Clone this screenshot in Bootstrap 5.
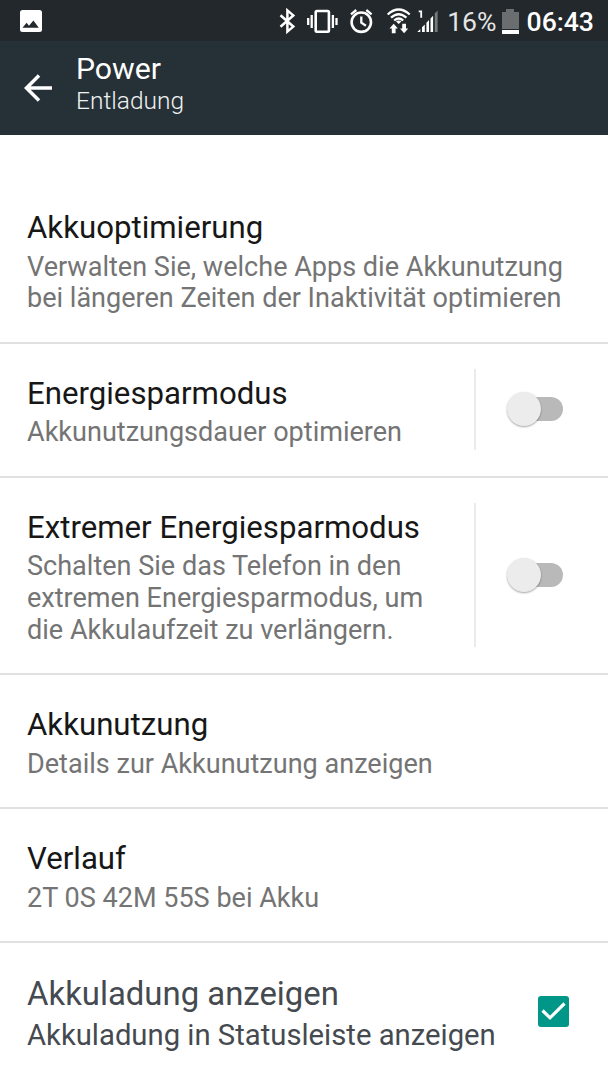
<!DOCTYPE html>
<html lang="de">
<head>
<meta charset="utf-8">
<meta name="viewport" content="width=device-width, initial-scale=1">
<title>Power</title>
<link href="https://cdn.jsdelivr.net/npm/bootstrap@5.3.0/dist/css/bootstrap.min.css" rel="stylesheet">
<style>
body{font-family:Roboto,"Noto Sans",sans-serif;background:#fff;height:1080px;overflow:hidden}
.statusbar{height:41px;background:#22282b;color:#fff;padding:0 14px 0 20px}
.statusbar svg{flex:none;display:block}
.pct{font-size:26.6px;font-weight:400;line-height:41px;padding-top:2px;color:#e4e5e5}
.clock{font-size:26.6px;font-weight:500;line-height:41px;padding-top:2px}
.appbar{height:94px;background:#263137;color:#fff;padding:10px 0 0 24px}
.appbar h1{font-size:30.2px;font-weight:400;line-height:36px;margin:0}
.appbar p{font-size:24.5px;font-weight:300;line-height:28px;margin:0;color:#f0f2f2}
.settings{padding-top:43px}
.settings .setting{padding:31px 27px 26.9px;border:0;border-bottom:2px solid #e0e0e0;background:none}
.setting h2{font-size:31.2px;font-weight:400;line-height:38px;margin:0 0 4.6px;color:#171717;white-space:nowrap}
.setting p{font-size:27.05px;line-height:31.6px;margin:0;color:#747474;white-space:nowrap}
.settings .last{border:0}
.last h2{font-size:32.9px;line-height:40px;margin:0;color:#454a50}
.last p{font-size:29.25px;line-height:42px;color:#454a50}
.toggle-cell{width:134px;margin:-6px -27px -1px 0;border-left:2px solid #ebebeb}
.toggle{width:56px;height:24px;border-radius:12px;background:linear-gradient(90deg,transparent 18px,#b9b9b9 18px);margin-left:31px}
.toggle i{display:block;width:34px;height:34px;border-radius:50%;background:#ececec;box-shadow:0 1px 2px rgba(0,0,0,.35);margin:-5px 0 0 0}
</style>
</head>
<body>
<header>
<div class="statusbar d-flex align-items-center">
<svg width="22" height="22" viewBox="0 0 22 22" class="me-auto"><rect width="22" height="22" rx="2.5" fill="#fff"/><path d="M2.5 17.7 6.6 12.8 9 15.8 13.4 10.5 18.8 17.7z" fill="#22282b"/></svg>
<svg width="160" height="41" viewBox="278 0 160 41" fill="none" stroke="#fff" stroke-width="2">
<path d="M280.5 15.3 293.3 26.6 287.4 31.6V10.4L293.3 15.4 280.5 26.7" stroke-width="2.5"/>
<rect x="315.7" y="11" width="13.2" height="20.8" rx="1.2" stroke-width="2.6"/>
<path d="M311.7 15v13M308.2 18v7M332.9 15v13M336.5 18v7" stroke-width="2.3"/>
<circle cx="361.3" cy="22.2" r="9.7" stroke-width="2.6"/><path d="M361.3 16.5v6.2l4.6 3M351 14.4l5.3-4.4M371.6 14.4 366.3 10" stroke-width="2.3"/>
<path d="M387.7 14.5Q398.7 4.5 409.7 14.5M391 17.7Q398.7 10.8 406.4 17.7M394.2 20.5Q398.7 16.5 403.2 20.5" stroke-width="2.3"/>
<path d="M398.7 24 396 21.6q2.7-2 5.4 0zM389.5 28.5l4.2-4.7 4.2 4.7h-2.3v4.8h-3.8v-4.8zM400 28.5h2.2v-4.8h3.8v4.8h2.2l-4.1 4.7z" fill="#fff" stroke="none"/>
<path d="M418.7 11.3h2.5v6.4" stroke-width="1.8"/>
<path d="M417.3 32l3-3v3zM422 32v-4.7l2.8-2.8V32zM426.4 32v-9.2l2.6-2.8V32zM430.5 32V18.5l2.6-2.8V32z" fill="#fff" stroke="none"/>
<path d="M434.8 32V13.5l2.8-3V32z" fill="#777b7d" stroke="none"/>
</svg>
<span class="pct" style="margin-left:9px">16%</span>
<svg width="17" height="25" viewBox="0 0 17 25" style="margin:2px 0 0 5px"><path d="M0 3h4V0h8v3h5v17H0z" fill="#6b6e70"/><path d="M0 21h17v4H0z" fill="#fff"/></svg>
<span class="clock" style="margin-left:8px">06:43</span>
</div>
<div class="appbar d-flex">
<svg width="28" height="28" viewBox="0 0 28 28" style="margin:23px 24px 0 0" fill="none" stroke="#fff" stroke-width="3.5"><path d="M28 14H3M15 1.5 2.5 14 15 26.5"/></svg>
<div><h1>Power</h1><p>Entladung</p></div>
</div>
</header>
<main class="settings list-group list-group-flush">
<section class="setting list-group-item"><h2>Akkuoptimierung</h2><p>Verwalten Sie, welche Apps die Akkunutzung<br>bei längeren Zeiten der Inaktivität optimieren</p></section>
<section class="setting list-group-item d-flex"><div class="flex-grow-1"><h2>Energiesparmodus</h2><p>Akkunutzungsdauer optimieren</p></div><div class="toggle-cell d-flex align-items-center"><div class="toggle"><i></i></div></div></section>
<section class="setting list-group-item d-flex"><div class="flex-grow-1"><h2>Extremer Energiesparmodus</h2><p>Schalten Sie das Telefon in den<br>extremen Energiesparmodus, um<br>die Akkulaufzeit zu verlängern.</p></div><div class="toggle-cell d-flex align-items-center"><div class="toggle"><i></i></div></div></section>
<section class="setting list-group-item"><h2>Akkunutzung</h2><p>Details zur Akkunutzung anzeigen</p></section>
<section class="setting list-group-item"><h2>Verlauf</h2><p>2T 0S 42M 55S bei Akku</p></section>
<section class="setting last list-group-item d-flex justify-content-between"><div><h2>Akkuladung anzeigen</h2><p>Akkuladung in Statusleiste anzeigen</p></div>
<svg width="31" height="31" viewBox="0 0 31 31" style="margin:22px 12px 0 0"><rect width="31" height="31" rx="3" fill="#009688"/><path d="m4.5 14.5 7.5 7.3L26.5 7.5" fill="none" stroke="#fff" stroke-width="3.2"/></svg></section>
</main>
<script src="https://cdn.jsdelivr.net/npm/bootstrap@5.3.0/dist/js/bootstrap.bundle.min.js"></script>
</body>
</html>
